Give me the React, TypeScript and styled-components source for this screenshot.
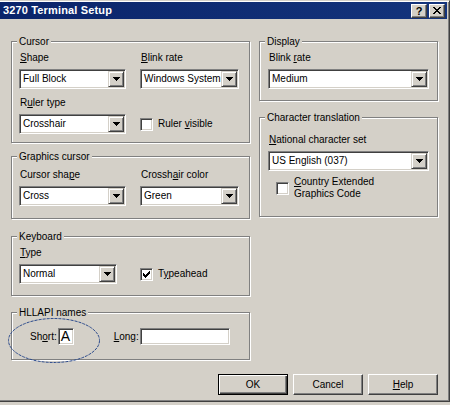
import React from "react";
import styled, { createGlobalStyle } from "styled-components";

const face = "#d4d0c8";

const GlobalStyle = createGlobalStyle`
  html, body {
    margin: 0;
    background: ${face};
  }
  body {
    font-family: "Liberation Sans", Arial, sans-serif;
    font-size: 10px;
    color: #000;
  }
`;

const Window = styled.div`
  box-sizing: border-box;
  width: 450px;
  height: 402px;
  display: flex;
  flex-direction: column;
  padding: 1px 2px 0 0;
  background: ${face};
  border-top: 1px solid ${face};
  border-right: 1px solid #404040;
  border-bottom: 1px solid #404040;
  box-shadow: inset 0 1px #fff, inset -1px -1px #808080;
`;

const TitleBar = styled.div`
  height: 17px;
  display: flex;
  align-items: center;
  padding: 0 2px 0 3px;
  background: linear-gradient(90deg, #0a246a, #14347c);
  color: #fff;
  font-size: 11px;
  font-weight: bold;
`;

const TitleText = styled.span`
  flex: 1;
  line-height: 17px;
  letter-spacing: 0.15px;
`;

const CaptionButton = styled.div`
  box-sizing: border-box;
  width: 16px;
  height: 14px;
  margin-left: 2px;
  display: flex;
  align-items: center;
  justify-content: center;
  background: ${face};
  color: #000;
  font-size: 11px;
  font-weight: bold;
  line-height: 12px;
  border: 1px solid;
  border-color: #fff #404040 #404040 #fff;
  box-shadow: inset -1px -1px #808080;
`;

const Body = styled.div`
  width: 427px;
  padding: 22px 0 0 11px;
  display: flex;
  flex-direction: column;
`;

const Columns = styled.div`
  display: flex;
  justify-content: space-between;
  align-items: flex-start;
`;

const Column = styled.div<{ $w: number }>`
  width: ${(p) => p.$w}px;
  display: flex;
  flex-direction: column;
`;

const Group = styled.div<{ $h: number; $pt: number; $mt?: number; $pl?: number }>`
  position: relative;
  box-sizing: border-box;
  height: ${(p) => p.$h}px;
  margin-top: ${(p) => p.$mt ?? 0}px;
  padding: ${(p) => p.$pt}px 0 0 ${(p) => p.$pl ?? 7}px;
  border: 1px solid #808080;
  box-shadow: inset 1px 1px #fff, 1px 1px #fff;
`;

const Legend = styled.span`
  position: absolute;
  top: -7px;
  left: 5px;
  padding: 0 2px;
  line-height: 13px;
  background: ${face};
  white-space: nowrap;
`;

const Row = styled.div<{ $gap?: number; $mt?: number }>`
  display: flex;
  align-items: flex-end;
  gap: ${(p) => p.$gap ?? 14}px;
  margin-top: ${(p) => p.$mt ?? 0}px;
`;

const Field = styled.div<{ $w: number }>`
  width: ${(p) => p.$w}px;
  display: flex;
  flex-direction: column;
  gap: 5px;
`;

const Label = styled.span`
  line-height: 13px;
  padding-left: 1px;
  white-space: nowrap;
`;

const ComboBox = styled.div<{ $w: number }>`
  box-sizing: border-box;
  width: ${(p) => p.$w}px;
  height: 20px;
  padding: 1px;
  display: flex;
  align-items: center;
  background: #fff;
  border: 1px solid;
  border-color: #808080 #fff #fff #808080;
  box-shadow: inset 1px 1px #404040, inset -1px -1px ${face};
`;

const ComboText = styled.span`
  flex: 1;
  min-width: 0;
  padding-left: 2px;
  overflow: hidden;
  white-space: nowrap;
  line-height: 16px;
`;

const DropButton = styled.div`
  box-sizing: border-box;
  flex-shrink: 0;
  width: 16px;
  height: 16px;
  display: flex;
  align-items: center;
  justify-content: center;
  background: ${face};
  border: 1px solid;
  border-color: ${face} #404040 #404040 ${face};
  box-shadow: inset 1px 1px #fff, inset -1px -1px #808080;
`;

const CheckRow = styled.label<{ $ml?: number; $mt?: number }>`
  display: flex;
  align-items: center;
  gap: 5px;
  height: 20px;
  margin-left: ${(p) => p.$ml ?? 0}px;
  margin-top: ${(p) => p.$mt ?? 0}px;
  line-height: 12px;
`;

const CheckBox = styled.span`
  box-sizing: border-box;
  flex-shrink: 0;
  width: 13px;
  height: 13px;
  display: flex;
  align-items: center;
  justify-content: center;
  background: #fff;
  border: 1px solid;
  border-color: #808080 #fff #fff #808080;
  box-shadow: inset 1px 1px #404040, inset -1px -1px ${face};
`;

const NamesRow = styled.div`
  display: flex;
  align-items: center;
  padding-left: 11px;
`;

const InlineLabel = styled.span<{ $ml?: number }>`
  margin-left: ${(p) => p.$ml ?? 0}px;
  margin-right: 1px;
  line-height: 13px;
`;

const TextBox = styled.div<{ $w: number }>`
  box-sizing: border-box;
  width: ${(p) => p.$w}px;
  height: 17px;
  padding-left: 2px;
  background: #fff;
  font-size: 14px;
  line-height: 15px;
  border: 1px solid;
  border-color: #808080 #fff #fff #808080;
  box-shadow: inset 1px 1px #404040, inset -1px -1px ${face};
`;

const Marker = styled.svg`
  position: absolute;
  left: -4px;
  top: 5px;
  overflow: visible;
`;

const ButtonRow = styled.div`
  display: flex;
  justify-content: flex-end;
  gap: 5px;
  margin-top: 14px;
`;

const Button = styled.button<{ $default?: boolean }>`
  box-sizing: border-box;
  width: 70px;
  height: 21px;
  padding: 0;
  background: ${face};
  font: inherit;
  color: #000;
  border: 1px solid;
  border-color: ${(p) => (p.$default ? "#000" : "#fff #404040 #404040 #fff")};
  box-shadow: ${(p) =>
    p.$default
      ? "inset 1px 1px #fff, inset -1px -1px #404040, inset -2px -2px #808080"
      : "inset -1px -1px #808080"};
`;

const pixels = (rows: string[]) =>
  rows
    .flatMap((r, y) =>
      r.split("").map((c, x) => (c === "#" ? `M${x} ${y}h1v1h-1z` : ""))
    )
    .join("");

const arrowPath = pixels(["#######", ".#####.", "..###..", "...#..."]);
const closePath = pixels([
  "##....##",
  ".##..##.",
  "..####..",
  "...##...",
  "..####..",
  ".##..##.",
  "##....##",
]);
const checkPath = pixels([
  "......#",
  ".....##",
  "#...###",
  "##.###.",
  "#####..",
  ".###...",
  "..#....",
]);

function Combo({ w, value }: { w: number; value: string }) {
  return (
    <ComboBox $w={w}>
      <ComboText>{value}</ComboText>
      <DropButton>
        <svg width="7" height="4" shapeRendering="crispEdges">
          <path d={arrowPath} fill="#000" />
        </svg>
      </DropButton>
    </ComboBox>
  );
}

function Check({ checked }: { checked?: boolean }) {
  return (
    <CheckBox>
      {checked && (
        <svg width="7" height="7" shapeRendering="crispEdges">
          <path d={checkPath} fill="#000" />
        </svg>
      )}
    </CheckBox>
  );
}

export default function App() {
  return (
    <>
      <GlobalStyle />
      <Window>
        <TitleBar>
          <TitleText>3270 Terminal Setup</TitleText>
          <CaptionButton>?</CaptionButton>
          <CaptionButton>
            <svg width="8" height="7" shapeRendering="crispEdges">
              <path d={closePath} fill="#000" />
            </svg>
          </CaptionButton>
        </TitleBar>

        <Body>
          <Columns>
            <Column $w={239}>
              <Group $h={102} $pt={9}>
                <Legend>Cursor</Legend>
                <Row>
                  <Field $w={107}>
                    <Label>
                      <u>S</u>hape
                    </Label>
                    <Combo w={107} value="Full Block" />
                  </Field>
                  <Field $w={99}>
                    <Label>
                      <u>B</u>link rate
                    </Label>
                    <Combo w={99} value="Windows System" />
                  </Field>
                </Row>
                <Row $mt={7}>
                  <Field $w={107}>
                    <Label>
                      R<u>u</u>ler type
                    </Label>
                    <Combo w={107} value="Crosshair" />
                  </Field>
                  <CheckRow>
                    <Check />
                    <span>
                      Ruler <u>v</u>isible
                    </span>
                  </CheckRow>
                </Row>
              </Group>

              <Group $h={63} $pt={11} $mt={13}>
                <Legend>Graphics cursor</Legend>
                <Row>
                  <Field $w={107}>
                    <Label>
                      Cursor sha<u>p</u>e
                    </Label>
                    <Combo w={107} value="Cross" />
                  </Field>
                  <Field $w={99}>
                    <Label>
                      Crossh<u>a</u>ir color
                    </Label>
                    <Combo w={99} value="Green" />
                  </Field>
                </Row>
              </Group>

              <Group $h={60} $pt={9} $mt={17}>
                <Legend>Keyboard</Legend>
                <Row>
                  <Field $w={107}>
                    <Label>
                      <u>T</u>ype
                    </Label>
                    <Combo w={98} value="Normal" />
                  </Field>
                  <CheckRow>
                    <Check checked />
                    <span>
                      T<u>y</u>peahead
                    </span>
                  </CheckRow>
                </Row>
              </Group>

              <Group $h={48} $pt={15} $mt={16}>
                <Legend>HLLAPI names</Legend>
                <NamesRow>
                  <InlineLabel>
                    Sh<u>o</u>rt:
                  </InlineLabel>
                  <TextBox $w={16}>A</TextBox>
                  <InlineLabel $ml={40}>
                    <u>L</u>ong:
                  </InlineLabel>
                  <TextBox $w={90} />
                </NamesRow>
                <Marker width="92" height="45">
                  <ellipse
                    cx="46"
                    cy="22.5"
                    rx="45.5"
                    ry="22"
                    fill="none"
                    stroke="#2b4a8c"
                    strokeWidth="1"
                    strokeDasharray="3 1"
                  />
                </Marker>
              </Group>
            </Column>

            <Column $w={179}>
              <Group $h={60} $pt={9} $pl={8}>
                <Legend>Display</Legend>
                <Field $w={161}>
                  <Label>
                    Blink <u>r</u>ate
                  </Label>
                  <Combo w={161} value="Medium" />
                </Field>
              </Group>

              <Group $h={100} $pt={15} $pl={8} $mt={16}>
                <Legend>Character translation</Legend>
                <Field $w={161}>
                  <Label>
                    <u>N</u>ational character set
                  </Label>
                  <Combo w={161} value="US English (037)" />
                </Field>
                <CheckRow $ml={8} $mt={7}>
                  <Check />
                  <span>
                    <u>C</u>ountry Extended
                    <br />
                    Graphics Code
                  </span>
                </CheckRow>
              </Group>
            </Column>
          </Columns>

          <ButtonRow>
            <Button $default>OK</Button>
            <Button>Cancel</Button>
            <Button>
              <u>H</u>elp
            </Button>
          </ButtonRow>
        </Body>
      </Window>
    </>
  );
}
